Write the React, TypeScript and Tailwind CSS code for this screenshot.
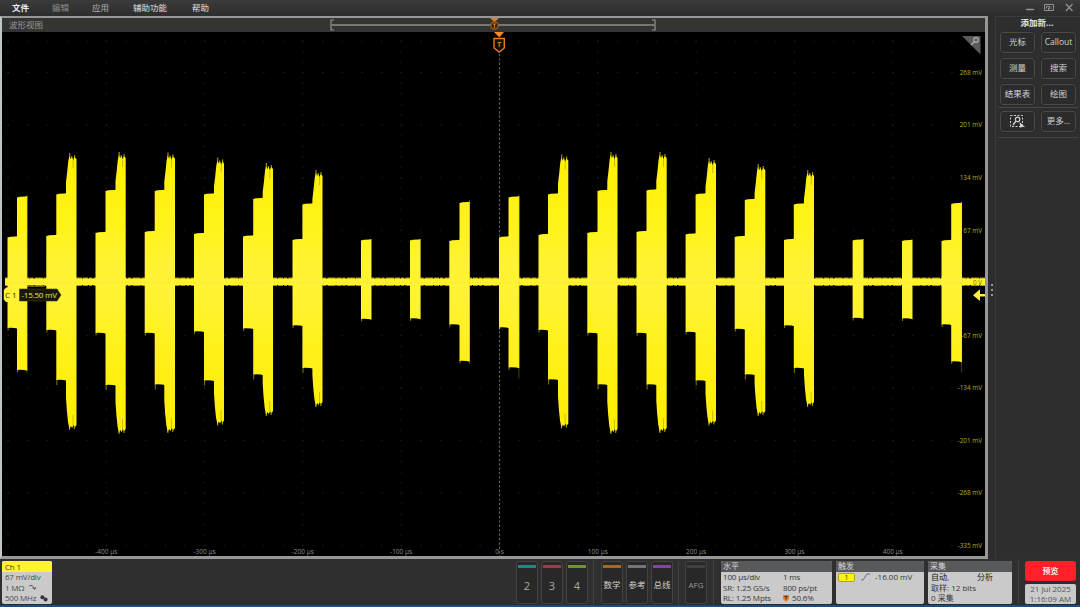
import React from "react";

type Step = [left: number, right: number, top: number, bottom: number];

const bursts: Step[][] = [
  [[7.5, 17, 236.5, 328], [17, 27.3, 196.5, 370]],
  [[46.3, 56.3, 235, 330], [56.3, 66, 193.5, 380], [66, 76.5, 155, 429]],
  [[95.5, 105.5, 232, 333], [105.5, 115.5, 190, 385], [115.5, 125.7, 154, 433]],
  [[144.7, 154.7, 231, 333], [154.7, 164.3, 190, 384.5], [164.3, 175, 154.5, 432]],
  [[194, 204, 233, 331.5], [204, 214, 193.5, 380.5], [214, 224, 159.5, 424.5]],
  [[243, 253.2, 235.5, 328.5], [253.2, 262.7, 198, 374.5], [262.7, 273, 165, 415]],
  [[292.5, 302.4, 239, 325.5], [302.4, 312.4, 203.5, 368], [312.4, 322.5, 172, 406]],
  [[361, 371.5, 239.5, 319]],
  [[410, 420.6, 239.5, 318.5]],
  [[449.3, 459.5, 240, 324.5], [459.5, 469.8, 202, 361]],
  [[499, 508.5, 236.5, 327.5], [508.5, 519.3, 196.5, 367.5]],
  [[538.5, 548, 234, 330], [548, 558, 193.5, 379.5], [558, 568.3, 156.5, 427.5]],
  [[587.3, 597.5, 232, 333], [597.5, 607.3, 190, 384.5], [607.3, 617.5, 154, 433]],
  [[636.5, 646.5, 231, 333], [646.5, 656.3, 189.5, 384.5], [656.3, 666.7, 154, 432]],
  [[685.6, 695.6, 233.5, 332], [695.6, 705.5, 193.5, 380.5], [705.5, 716, 160, 424.5]],
  [[734.7, 744.8, 236, 329], [744.8, 754.6, 199, 374.5], [754.6, 765.3, 166, 415]],
  [[784, 793.8, 239, 325.5], [793.8, 804, 203.5, 368], [804, 814, 172, 406]],
  [[852.6, 863.5, 239.5, 318]],
  [[902, 912.5, 240, 318.5]],
  [[941.5, 951.2, 240, 324.5], [951.2, 962, 203, 361.5]],
];

const majorX = [8, 106.3, 204.5, 302.8, 401.1, 499.5, 597.8, 696.1, 794.4, 892.7];
const majorY = [72.5, 125, 177.6, 230.2, 282.7, 335.3, 387.9, 440.4, 493, 545.5];
const voltLabels = ["268 mV", "201 mV", "134 mV", "67 mV", "0 V", "-67 mV", "-134 mV", "-201 mV", "-268 mV", "-335 mV"];
const timeLabels = ["-400 µs", "-300 µs", "-200 µs", "-100 µs", "0 s", "100 µs", "200 µs", "300 µs", "400 µs"];

function stepPath([l, right, t, b]: Step, peak: boolean, last: boolean) {
  // Overlap the following step slightly so that no seam shows between them.
  const r = last ? right : right + 0.9;
  if (!peak) {
    return `M${l} ${t + 1}L${l + 3} ${t + 0.3}L${r - 2} ${t}L${r} ${t - 0.5}V${b + 0.8}L${r - 3} ${b}L${l + 3} ${b - 0.3}L${l} ${b}Z`;
  }
  return `M${l} ${t + 27}L${l + 1.2} ${t + 17}L${l + 2.3} ${t + 6}L${l + 3.3} ${t + 1}L${l + 4.6} ${t + 4}L${l + 6} ${t + 2}L${l + 7.2} ${t + 5}L${l + 8.4} ${t + 2}L${r} ${t + 4}V${b - 4}L${r - 1.5} ${b - 2}L${l + 7.4} ${b - 4}L${l + 6.2} ${b - 1}L${l + 4.8} ${b - 3}L${l + 3.4} ${b}L${l + 2} ${b - 7}L${l + 0.9} ${b - 18}L${l} ${b - 31}Z`;
}

function Trace() {
  return (
    <g>
      <path d="M5 281.8H985" stroke="#a89f00" strokeWidth="8.6" strokeDasharray="5 1 3 1.5 8 1" />
      <path d="M5 281.8H985" stroke="#fff22b" strokeWidth="6.6" />
      {bursts.map((steps, i) => (
        <g key={i}>
          {steps.map((s, j) => (
            <g key={j}>
              <path d={stepPath(s, j === 2, j === steps.length - 1)} fill="url(#beam)" />
              {j === 2 ? (
                <>
                  <path
                    d={`M${s[0] + 3.7} ${s[2] - 2}V${s[2] + 8}M${s[0] + 5.7} ${s[2] + 1}V${s[2] + 8}M${s[0] + 8.6} ${s[2]}V${s[2] + 9}M${s[0] + 3.6} ${s[3] - 8}V${s[3] + 1}M${s[0] + 8.4} ${s[3] - 8}V${s[3]}`}
                    stroke="#fff200" strokeOpacity="0.6" strokeWidth="1.2"
                  />
                  <path
                    d={`M${s[0] + 7.2} ${s[2] + 4}V${s[2] + 13}M${s[0] + 7.1} ${s[3] - 14}V${s[3] - 4}`}
                    stroke="#6c6500" strokeOpacity="0.45" strokeWidth="0.8"
                  />
                </>
              ) : (
                <path d={`M${s[0] + 0.6} ${s[3] - 1}v${j === 1 && steps.length === 3 ? 6 : 3.5}`} stroke="#fff200" strokeOpacity="0.5" />
              )}
            </g>
          ))}
          {steps.length === 2 && (
            <path d={`M${steps[1][1] - 0.4} ${steps[1][2] - 2}V${steps[1][3] + (i > 9 ? 11 : 3)}`} stroke="#d8cc00" strokeOpacity="0.4" strokeWidth="0.8" />
          )}
        </g>
      ))}
    </g>
  );
}

function Plot() {
  return (
    <svg className="block h-[524px] w-[983px] bg-black" viewBox="2 32 983 524" fontFamily="'Open Sans','Noto Sans',sans-serif">
      <defs>
        <linearGradient id="beam" gradientUnits="userSpaceOnUse" x1="0" y1="150" x2="0" y2="435">
          <stop offset="0" stopColor="#fff000" />
          <stop offset="0.28" stopColor="#fff31c" />
          <stop offset="0.4" stopColor="#fff333" />
          <stop offset="0.52" stopColor="#fff333" />
          <stop offset="0.68" stopColor="#fff11c" />
          <stop offset="1" stopColor="#ffee00" />
        </linearGradient>
      </defs>
      <g stroke="#1e1e1e" fill="none">
        {majorX.map((x) => (
          <path key={x} d={`M${x} 40.5V556`} strokeDasharray="1.5 9.01" />
        ))}
        {[41.5, ...majorY].map((y) => (
          <path key={y} d={`M7.5 ${y}H960`} strokeDasharray="1.5 18.16" />
        ))}
      </g>
      <path d="M499.5 54V556" stroke="#626262" strokeWidth="1.2" strokeDasharray="2.2 2.2" />
      <g fill="#b8ae14" fontSize="6.4" textAnchor="end">
        {majorY.map((y, i) => (
          <text key={y} x="982" y={y + 2.3}>{voltLabels[i]}</text>
        ))}
      </g>
      <Trace />
      <path d="M8 282.7H963" stroke="#dfd75b" strokeOpacity="0.7" strokeDasharray="1.5 2.4" />
      <text x="982" y="285" fill="#797200" fontSize="6.4" textAnchor="end">0 V</text>
      <g fill="#8c8c8c" fontSize="6.5" textAnchor="middle">
        {timeLabels.map((t, i) => (
          <text key={t} x={majorX[i + 1]} y="554.3">{t}</text>
        ))}
      </g>
      <path d="M962 36H980.5V54.5Z" fill="#5b5b5b" />
      <path d="M971 45L974.5 41.5" stroke="#aaa" strokeWidth="1.5" />
      <circle cx="976" cy="40" r="2.3" fill="none" stroke="#aaa" strokeWidth="1.2" />
      <path d="M494 32H504L499.3 37.5Z" fill="#ff8a1e" />
      <path d="M494 38.5H504.3V48L499.2 52L494 48Z" fill="#160c00" stroke="#e87c18" strokeWidth="1.4" />
      <text x="499.2" y="46.5" fill="#d87518" fontSize="7.5" fontWeight="700" textAnchor="middle">T</text>
      <path d="M27 286.2H45" stroke="#8c8618" />
      <path d="M6 287.5H21V302H6L3.8 299.5V290Z" fill="#fff333" />
      <path d="M19.5 289H57L61 295L57 301H19.5Z" fill="#17170d" stroke="#454100" strokeWidth="0.6" />
      <text x="5" y="298.2" fill="#333000" fontSize="8" textLength="11.5">C 1</text>
      <text x="21.5" y="298.2" fill="#eee431" fontSize="8" textLength="35.5">-15.50 mV</text>
      <path d="M973 295.2L980 289.3V294H985V296.4H980V301Z" fill="#fff333" />
    </svg>
  );
}

function ToolButton({ children }: { children: React.ReactNode }) {
  return (
    <button className="flex h-[21px] w-[35px] items-center justify-center whitespace-nowrap rounded-[3px] border border-[#4c4946] bg-[#2b2b2b] text-[8.5px] leading-none text-[#d2d2d2] shadow-[0_0_1px_#151515]">
      {children}
    </button>
  );
}

function Sidebar() {
  return (
    <aside className="flex w-[92px] shrink-0">
      <div className="flex w-[7px] flex-col items-center justify-center gap-[3px] pt-1">
        <i className="size-0.5 bg-[#999]" />
        <i className="size-0.5 bg-[#999]" />
        <i className="size-0.5 bg-[#999]" />
      </div>
      <div className="flex flex-1 flex-col border-l border-t border-[#3a3a3a] bg-[#2e2e2e]">
        <h2 className="h-[15px] pr-[2px] pt-[1px] text-center text-[8.5px] font-bold leading-[10px] text-[#e4e4e4]">添加新...</h2>
        <div className="grid grid-cols-[35px_35px] gap-x-[6px] gap-y-[5px] pl-1">
          <ToolButton>光标</ToolButton>
          <ToolButton>Callout</ToolButton>
          <ToolButton>测量</ToolButton>
          <ToolButton>搜索</ToolButton>
          <ToolButton>结果表</ToolButton>
          <ToolButton>绘图</ToolButton>
        </div>
        <div className="mx-[2px] mt-[2px] grid grid-cols-[35px_35px] gap-x-[6px] border-y border-[#454545] pb-[5px] pl-[2px] pt-[3px]">
          <ToolButton>
            <svg className="h-[15px] w-[17px]" viewBox="0 0 17 15" fill="none" stroke="#cecece">
              <rect x="1.5" y="1.5" width="12" height="11" strokeDasharray="2 1.5" />
              <path d="M4 11L7 7" strokeWidth="1.4" />
              <circle cx="8.6" cy="5.4" r="2.2" strokeWidth="1.2" />
              <path d="M10.5 8L16 13L13 12.8L11.5 14Z" fill="#ddd" stroke="none" />
            </svg>
          </ToolButton>
          <ToolButton>更多...</ToolButton>
        </div>
      </div>
    </aside>
  );
}

function SourceKey({ label, stripe, text }: { label: string; stripe: string; text: string }) {
  return (
    <button className="flex h-[43px] w-[22px] flex-col items-center rounded-[3px] border border-[#444240] bg-[#282828] pt-[3px]">
      <i className={`h-[3px] w-[18px] ${stripe}`} />
      <span className={`flex flex-1 items-center whitespace-nowrap pb-px leading-none ${text}`}>{label}</span>
    </button>
  );
}

function Badge({ title, width, children }: { title: string; width: string; children: React.ReactNode }) {
  return (
    <section className={`h-[43px] shrink-0 overflow-hidden rounded-[2px] bg-[#cacaca] text-[8px] leading-[10.5px] text-[#383838] ${width}`}>
      <h3 className="h-[11px] bg-[#58595b] pl-[2px] text-[8px] leading-[10px] text-[#d6d6d6]">{title}</h3>
      {children}
    </section>
  );
}

function Footer() {
  return (
    <footer className="flex h-[46px] items-start border-b border-[#252b32] bg-[#2f2f2f] pt-[2px]">
      <section className="ml-[2px] h-[43px] w-[50px] overflow-hidden rounded-[2px] bg-[#cacaca] text-[8px] leading-[10.5px] tracking-[-0.2px] text-[#4b4b4b]">
        <h3 className="h-[11px] bg-[#fff333] pl-[3px] text-[8px] leading-[11px] text-[#484500]">Ch 1</h3>
        <p className="pl-[3px]">67 mV/div</p>
        <p className="flex items-center gap-[5px] pl-[3px]">
          1 MΩ
          <svg className="h-[7px] w-[8px]" viewBox="0 0 8 7" fill="none" stroke="#555"><path d="M0 2Q4 0 5.5 5M3.5 3.5L5.5 5.5L7 3" /></svg>
        </p>
        <p className="flex items-center gap-[4px] pl-[3px]">
          500 MHz
          <svg className="h-[7px] w-[8px]" viewBox="0 0 8 7" fill="#333"><circle cx="2.4" cy="2.3" r="2" /><circle cx="5.6" cy="4.6" r="2" /></svg>
        </p>
      </section>
      <div className="ml-[464px] flex gap-[3px]">
        <SourceKey label="2" stripe="bg-[#248487]" text="text-[11px] text-[#a9a9a9]" />
        <SourceKey label="3" stripe="bg-[#9d3d4c]" text="text-[11px] text-[#a9a9a9]" />
        <SourceKey label="4" stripe="bg-[#6c9334]" text="text-[11px] text-[#a9a9a9]" />
      </div>
      <div className="ml-[5px] h-[43px] w-px bg-[#424242]" />
      <div className="ml-[7px] flex gap-[3px]">
        <SourceKey label="数学" stripe="bg-[#a76824]" text="text-[8.5px] text-[#d0d0d0]" />
        <SourceKey label="参考" stripe="bg-[#72757d]" text="text-[8.5px] text-[#d0d0d0]" />
        <SourceKey label="总线" stripe="bg-[#8445a0]" text="text-[8.5px] text-[#d0d0d0]" />
      </div>
      <div className="ml-[5px] h-[43px] w-px bg-[#424242]" />
      <div className="ml-[6px] flex">
        <SourceKey label="AFG" stripe="bg-[#414141]" text="text-[8px] text-[#999]" />
      </div>
      <div className="ml-[6px] h-[43px] w-px bg-[#424242]" />
      <div className="ml-auto flex gap-[4px]">
        <Badge title="水平" width="w-[111px]">
          <div className="grid grid-cols-[60px_1fr] whitespace-nowrap pl-[2px] tracking-[-0.15px]">
            <span>100 µs/div</span><span>1 ms</span>
            <span>SR: 1.25 GS/s</span><span>800 ps/pt</span>
            <span>RL: 1.25 Mpts</span>
            <span className="flex items-center gap-[3px]">
              <svg className="h-[7px] w-[6px]" viewBox="0 0 6 7"><path d="M0 0H6V4L3 7L0 4Z" fill="#e57f20" /><path d="M1.5 1.5H4.5M3 1.5V4.5" stroke="#4b2400" /></svg>
              50.6%
            </span>
          </div>
        </Badge>
        <Badge title="触发" width="w-[88px]">
          <div className="flex items-center pl-[2px]">
            <span className="h-[9px] w-[17px] rounded-[2px] border border-[#b3a600] bg-[#fff21b] text-center text-[7px] leading-[7px] text-[#484300]">1</span>
            <svg className="ml-[6px] h-[8px] w-[9px]" viewBox="0 0 9 8" fill="none" stroke="#69699a"><path d="M0 7H2L6 1H9" /></svg>
            <span className="ml-[5px] whitespace-nowrap">-16.00 mV</span>
          </div>
        </Badge>
        <Badge title="采集" width="w-[84px]">
          <div className="grid grid-cols-[46px_1fr] pl-[3px]">
            <span className="text-[#171717]">自动,</span><span className="text-[#171717]">分析</span>
            <span className="col-span-2">取样: 12 bits</span>
            <span className="col-span-2">0 采集</span>
          </div>
        </Badge>
      </div>
      <div className="ml-[6px] h-[43px] w-px bg-[#424242]" />
      <div className="ml-[6px] mr-[4px] flex w-[51px] flex-col gap-[3px]">
        <button className="h-[20px] rounded-[3px] bg-[#ff2029] text-[8px] font-bold leading-[20px] text-[#ffe7e7]">预览</button>
        <div className="h-[20px] whitespace-nowrap rounded-[2px] bg-[#cacaca] text-center text-[8px] leading-[10px] text-[#555]">
          <p>21 Jul 2025</p>
          <p>1:16:09 AM</p>
        </div>
      </div>
    </footer>
  );
}

export default function App() {
  return (
    <div lang="zh-CN" className="flex h-[607px] w-[1080px] flex-col overflow-hidden bg-[#2d2d2d] font-['Open_Sans','Noto_Sans_CJK_SC',sans-serif]">
      <header className="flex h-[16px] shrink-0 items-center bg-linear-to-b from-[#3b3b3b] to-[#2d2d2d] pl-[12px] text-[8.5px] leading-none text-[#c5c5c5]">
        <nav className="flex whitespace-nowrap">
          <span className="w-10 font-bold text-[#eee]">文件</span>
          <span className="w-10 text-[#8c8c8c]">编辑</span>
          <span className="w-[41px] text-[#b0b0b0]">应用</span>
          <span className="w-[59px] font-medium">辅助功能</span>
          <span className="font-medium">帮助</span>
        </nav>
        <svg className="ml-auto mr-[6px] h-[10px] w-[48px]" viewBox="0 0 48 10" fill="none" stroke="#929292">
          <path d="M0 6.5H8" strokeWidth="1.5" />
          <path d="M18.5 1.5H27.5V7.5H18.5ZM20.5 5.5V3.5H24M22.5 7.5V5H25.5" />
          <path d="M40 1L46.5 8M46.5 1L40 8" strokeWidth="1.3" />
        </svg>
      </header>
      <main className="flex h-[543px] shrink-0">
        <section className="w-[988px] shrink-0 border-2 border-b-[3px] border-r-[3px] border-[#969799] border-l-[#c0c5c8]">
          <div className="flex h-[14px] items-center bg-[#343431] text-[8.5px] leading-none text-[#969696]">
            <span className="w-[326px] pl-[7px]">波形视图</span>
            <svg className="h-[14px] w-[330px]" viewBox="328 18 330 14" fill="none" stroke="#949494">
              <path d="M334 20H331V30H334M652 20H655V30H652" strokeWidth="1.2" />
              <path d="M331 25H655" stroke="#777" strokeWidth="2" />
              <path d="M490 18H499L494.5 22Z" fill="#e27d20" stroke="none" />
              <circle cx="494.5" cy="25.5" r="3.7" fill="#39230f" stroke="#a86320" strokeWidth="1.2" />
              <path d="M493 24H496M494.5 24V28" stroke="#cc7b2b" />
            </svg>
          </div>
          <Plot />
        </section>
        <Sidebar />
      </main>
      <Footer />
      <div className="h-[2px] shrink-0 bg-[#204b7b]" />
    </div>
  );
}
